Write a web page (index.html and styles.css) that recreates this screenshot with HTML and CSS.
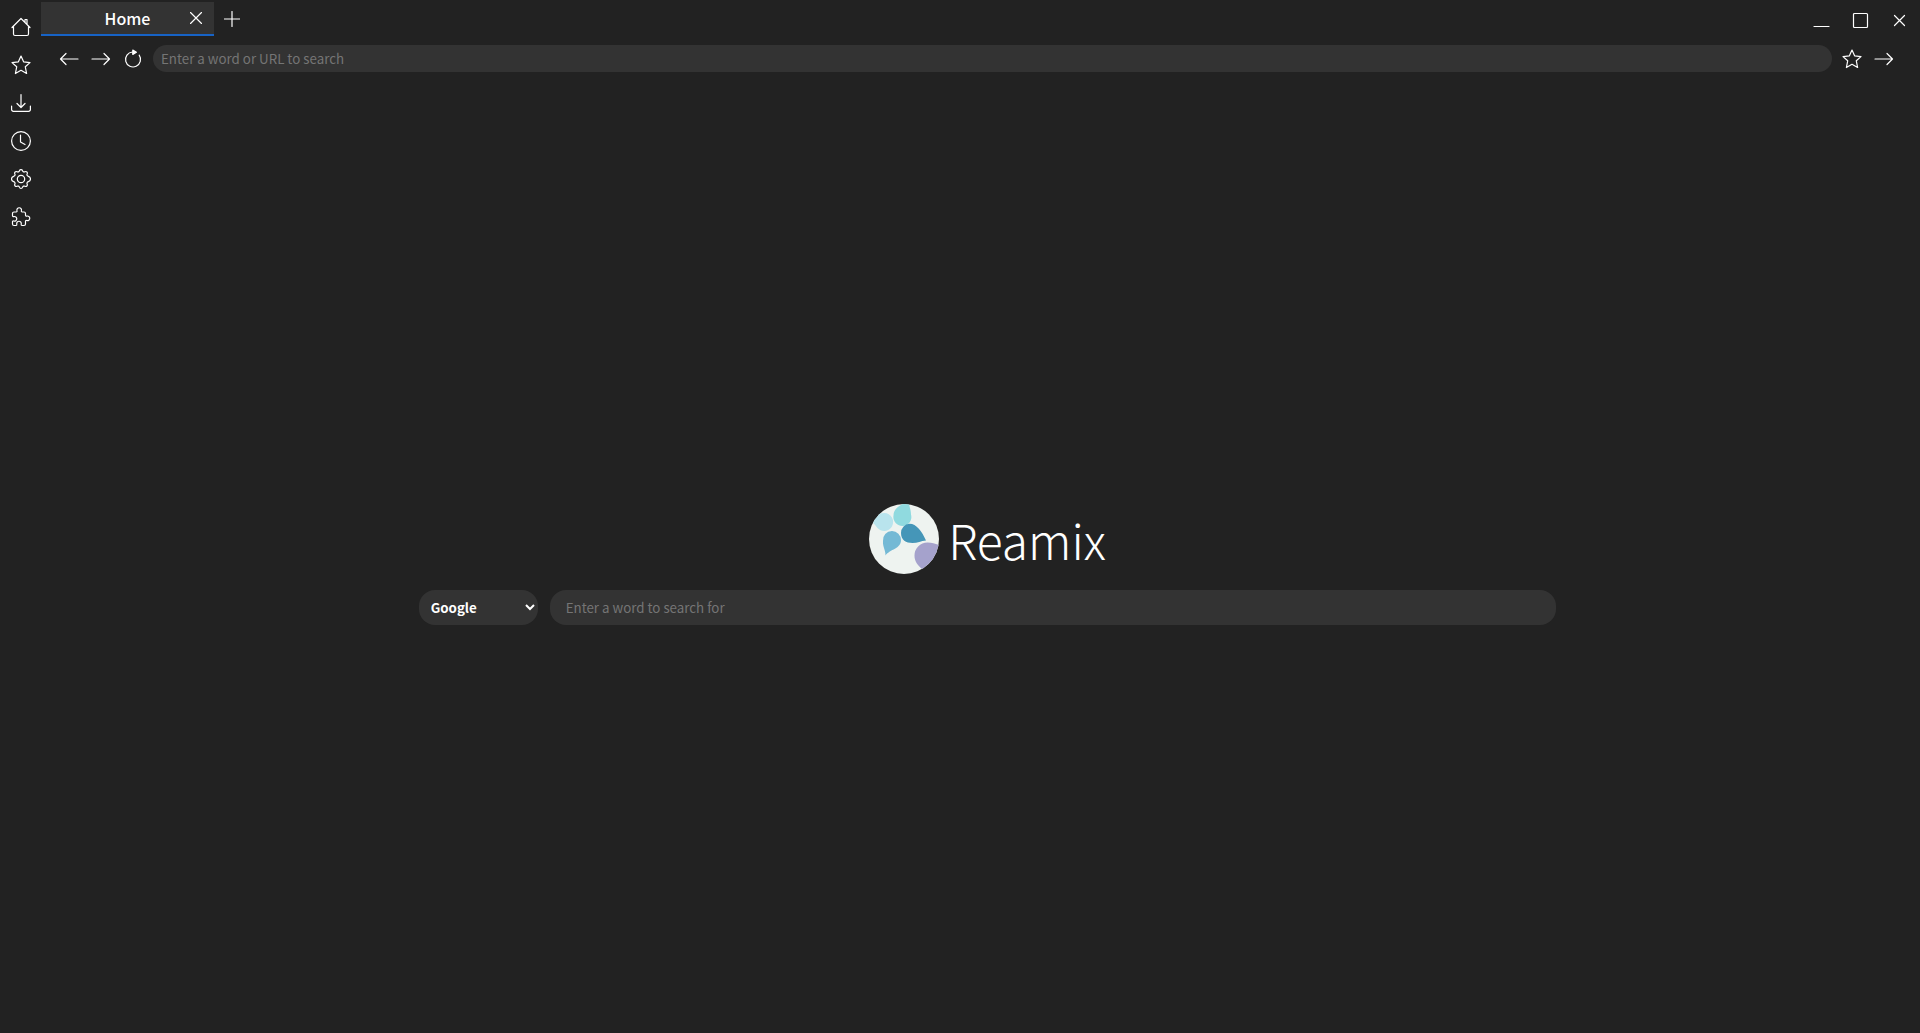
FILE: index.html
```html
<!DOCTYPE html>
<html lang="en">
<head>
<meta charset="utf-8">
<title>Reamix</title>
<link rel="stylesheet" href="styles.css">
</head>
<body>
<nav class="sidebar" aria-label="Sidebar">
  <button class="icon-button" aria-label="Home"><svg viewBox="0 0 20 20"><path d="M1 10.5 10 1.500 19 10.500M2.500 9.500V17a1.500 1.500 0 0 0 1.500 1.500h12a1.500 1.500 0 0 0 1.500-1.500V9.500M14 5V2.500h2V7"/></svg></button>
  <button class="icon-button" aria-label="Bookmarks"><svg viewBox="0 0 20 20"><path d="m10 1 2.600 5.800 6.400.8-4.700 4.200 1.300 6.700L10 15.300l-5.600 3.200 1.300-6.700L1 7.600l6.400-.8z"/></svg></button>
  <button class="icon-button" aria-label="Downloads"><svg viewBox="0 0 20 20"><path d="M.600 13v3.500a1.800 1.800 0 0 0 1.800 1.800h15.200a1.800 1.800 0 0 0 1.800-1.800V13M10 1.500v13M6 10.500l4 4 4-4"/></svg></button>
  <button class="icon-button" aria-label="History"><svg viewBox="0 0 20 20"><circle cx="10" cy="10" r="9.400"/><path d="M9.500 4v7l4.500 2.500"/></svg></button>
  <button class="icon-button" aria-label="Settings"><svg viewBox="0 0 20 20"><circle cx="10" cy="10" r="3.700"/><path d="M8.500 1.600c.4-1.300 2.600-1.300 3 0 .3 1.200 1.500 1.700 2.600 1.100 1.300-.7 2.700.7 2.100 2-.6 1.200-.1 2.300 1.200 2.700 1.300.4 2.200 1 2 2.600.2 1.600-.7 2.200-2 2.600-1.300.4-1.800 1.500-1.200 2.700.6 1.300-.8 2.700-2.100 2-1.100-.6-2.300-.1-2.600 1.100-.4 1.300-2.600 1.300-3 0-.3-1.200-1.500-1.700-2.600-1.100-1.300.7-2.700-.7-2.100-2 .6-1.200.1-2.300-1.200-2.700-1.300-.4-2.200-1-2-2.600-.2-1.600.7-2.200 2-2.600 1.300-.4 1.800-1.500 1.200-2.700-.6-1.300.8-2.700 2.100-2 1.100.6 2.300.1 2.600-1.100z"/></svg></button>
  <button class="icon-button" aria-label="Extensions"><svg viewBox="0 0 20 20"><path d="M1.500 6.500A1.500 1.500 0 0 1 3 5h2.200c.8 0 1-.7.8-1.300a2.300 2.300 0 1 1 4.400 0c-.2.600 0 1.300.8 1.300H13a1.500 1.500 0 0 1 1.500 1.500v1.800c0 .8.700 1 1.300.8a2.300 2.300 0 1 1 0 4.400c-.6-.2-1.300 0-1.300.8V17a1.500 1.500 0 0 1-1.500 1.500h-2c-.8 0-1-.7-.8-1.300a2.300 2.300 0 1 0-4.400 0c.2.600 0 1.300-.8 1.300H3A1.500 1.500 0 0 1 1.500 17v-2.200c0-.8.700-1 1.300-.8a2.300 2.300 0 1 0 0-4.400c-.6.200-1.300 0-1.300-.8z"/></svg></button>
</nav>
<div class="window">
  <header class="tabbar">
    <div class="tab">
      <span class="tab-title">Home</span>
      <button class="tab-close" aria-label="Close tab"><svg viewBox="0 0 12 12"><path d="m.5.5 11 11m0-11-11 11"/></svg></button>
    </div>
    <button class="new-tab" aria-label="New tab"><svg viewBox="0 0 16 16"><path d="M8 .5v15M.5 8h15"/></svg></button>
    <div class="window-controls">
      <button class="icon-button" aria-label="Minimize"><svg viewBox="0 0 20 20"><path d="M2 15.500h15"/></svg></button>
      <button class="icon-button" aria-label="Maximize"><svg viewBox="0 0 20 20"><rect x="2.500" y="2.500" width="14" height="14" rx="1"/></svg></button>
      <button class="icon-button" aria-label="Close window"><svg viewBox="0 0 20 20"><path d="m4.500 4.500 10 10m0-10-10 10"/></svg></button>
    </div>
  </header>
  <form class="toolbar">
    <button type="button" class="icon-button" aria-label="Back"><svg viewBox="0 0 20 20"><path d="M19 10H1.500M7 4.500 1.500 10 7 15.500"/></svg></button>
    <button type="button" class="icon-button" aria-label="Forward"><svg viewBox="0 0 20 20"><path d="M1 10h17.500M13 4.500l5.500 5.500-5.500 5.500"/></svg></button>
    <button type="button" class="icon-button" aria-label="Reload"><svg viewBox="0 0 20 20"><path d="M16.200 6.200A7.500 7.500 0 1 1 9.500 3"/><path class="solid" d="m9.800 1 3.600 2.200-3.600 2.200z"/></svg></button>
    <input class="address" type="text" aria-label="Address" placeholder="Enter a word or URL to search">
    <button type="button" class="icon-button" aria-label="Add bookmark"><svg viewBox="0 0 20 20"><path d="m10 1 2.600 5.800 6.400.8-4.700 4.200 1.300 6.700L10 15.300l-5.600 3.200 1.300-6.700L1 7.600l6.400-.8z"/></svg></button>
    <button type="submit" class="icon-button" aria-label="Go"><svg viewBox="0 0 20 20"><path d="M1 10h17.500M13 4.500l5.500 5.500-5.500 5.500"/></svg></button>
  </form>
  <main class="home">
    <h1 class="brand">
      <svg class="logo" viewBox="0 0 70 70" aria-hidden="true">
        <defs><clipPath id="disc"><circle cx="35" cy="35" r="35"/></clipPath></defs>
        <g clip-path="url(#disc)">
          <path fill="#eef3f0" d="M0 0h70v70H0z"/>
          <path fill="#b9e4ed" d="M-2 16C2 16 7 9 15.500 9A9 9 0 1 1 8 23.500C5 19 2 17-2 16z"/>
          <path fill="#90dadf" d="M40-4c-1 5 2 8 2 14.500a9 9 0 1 1-17.500 1C24.500 4 32 1 40-4z"/>
          <path fill="#4596b8" d="M57 36.500C53 27.500 47.500 19.800 40.500 19.800A9 9 0 0 0 32 29c0 7 5 10 11.500 10 5 0 8.500-2 13.500-2.500z"/>
          <path fill="#74b9d5" d="M16.500 51.500c.3-5-3-9-2.500-14.500a9 9 0 0 1 9-10 9 9 0 0 1 9 9c0 9-11 9-15.500 15.500z"/>
          <path fill="#a5a2cc" d="M72 41.500c-6-1.500-8-3-13.500-3A13 13 0 0 0 45.500 52c0 5 3 9 7.500 13 8 2 19-12 19-23.500z"/>
        </g>
      </svg>
      <span>Reamix</span>
    </h1>
    <form class="search">
      <select class="engine" aria-label="Search engine"><option>Google</option></select>
      <input class="query" type="text" aria-label="Search" placeholder="Enter a word to search for">
    </form>
  </main>
</div>
</body>
</html>
```
FILE: styles.css
```css
* { box-sizing: border-box; }

body {
  display: flex;
  min-height: 100vh;
  margin: 0;
  background: #222;
  color: #fff;
  font-family: "Noto Sans CJK JP", "Noto Sans", sans-serif;
}

button {
  display: flex;
  align-items: center;
  justify-content: center;
  padding: 0;
  border: 0;
  background: none;
  color: inherit;
}

button svg {
  width: 100%;
  height: 100%;
  fill: none;
  stroke: currentColor;
  stroke-width: 1.2;
  stroke-linejoin: round;
  stroke-linecap: round;
}

.solid { fill: currentColor; }

.icon-button {
  flex: none;
  width: 20px;
  height: 20px;
}

.sidebar {
  display: flex;
  flex: none;
  flex-direction: column;
  align-items: center;
  gap: 18px;
  width: 41px;
  padding-top: 17px;
}

.window {
  display: flex;
  flex: 1;
  flex-direction: column;
  min-width: 0;
}

.tabbar {
  display: flex;
  align-items: center;
  height: 36px;
  padding: 2px 10px 0 0;
}

.tab {
  display: grid;
  grid-template-columns: 24px 1fr 24px;
  align-items: center;
  width: 173px;
  height: 34px;
  padding: 0 6px;
  border-bottom: 2px solid #1763c6;
  background: #333;
}

.tab-title {
  grid-column: 2;
  font-size: 16px;
  font-weight: 500;
  line-height: 24px;
  text-align: center;
}

.tab-close { width: 24px; height: 24px; }
.tab-close svg { width: 12px; height: 12px; }
.new-tab { width: 16px; height: 16px; margin-left: 10px; }

.window-controls {
  display: flex;
  gap: 19px;
  margin-left: auto;
  padding-top: 4px;
}

.toolbar {
  display: flex;
  align-items: center;
  gap: 12px;
  padding: 9px 26px 0 18px;
}

input, select {
  min-width: 0;
  border: 0;
  outline: 0;
  background: #333;
  color: #fff;
  font-family: inherit;
}

::placeholder { color: #757575; }

.address {
  flex: 1;
  height: 27px;
  margin: 0 -2px;
  padding: 0 8px;
  border-radius: 14px;
}

.home {
  display: flex;
  flex: 1;
  flex-direction: column;
  align-items: center;
  justify-content: center;
  gap: 16px;
  padding: 24px 0 0 14px;
}

.brand {
  display: flex;
  gap: 9px;
  height: 70px;
  margin: 0;
  font-size: 48px;
  font-weight: 300;
  line-height: 70px;
}

.logo { width: 70px; height: 70px; }

.search {
  display: flex;
  gap: 12px;
  width: 61%;
}

.engine, .query {
  height: 35px;
  border-radius: 16px;
}

.engine {
  width: 119px;
  padding: 0 0 0 8px;
  font-weight: 700;
}

.query {
  flex: 1;
  padding: 0 16px;
}
```
